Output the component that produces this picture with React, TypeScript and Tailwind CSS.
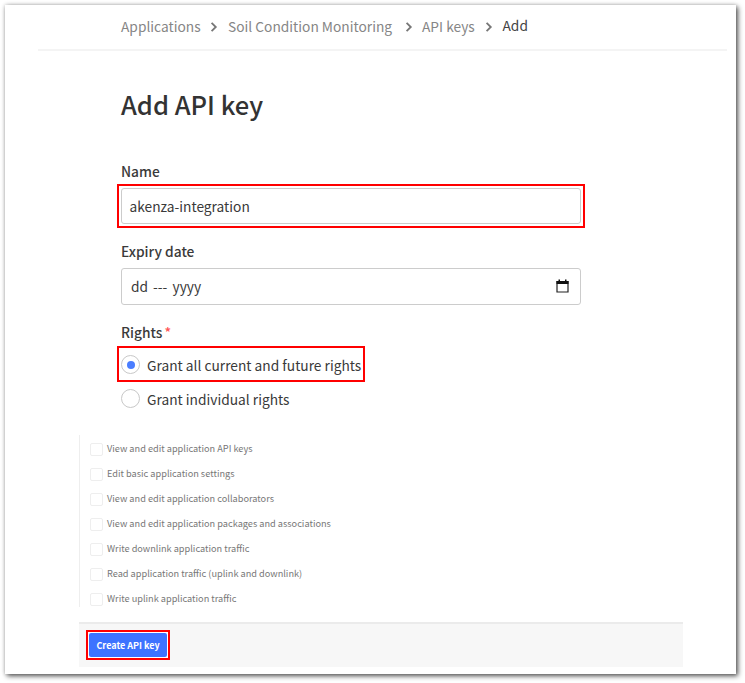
const rights = [
  'View and edit application API keys',
  'Edit basic application settings',
  'View and edit application collaborators',
  'View and edit application packages and associations',
  'Write downlink application traffic',
  'Read application traffic (uplink and downlink)',
  'Write uplink application traffic',
];

function Chevron({ className }: { className: string }) {
  return (
    <svg viewBox="0 0 8 12" className={`h-3 w-2 shrink-0 ${className}`} fill="none" stroke="#777" strokeWidth="1.8">
      <path d="M1.6 1.8 L5.8 6 L1.6 10.2" />
    </svg>
  );
}

function Breadcrumbs() {
  return (
    <nav className="ml-[33px] mr-[9px] flex h-[46px] items-center border-b-2 border-[#f4f4f4] pl-[83px] text-[13.75px] text-[#868686]">
      <span className="w-[80px]">Applications</span>
      <Chevron className="ml-[9px]" />
      <span className="ml-[10px] w-[165px]">Soil Condition Monitoring</span>
      <Chevron className="ml-[12px]" />
      <span className="ml-[9px] w-[54px]">API keys</span>
      <Chevron className="ml-[9px]" />
      <span className="mb-[2px] ml-[9.5px] text-[#444]">Add</span>
    </nav>
  );
}

function Radio({ label, checked = false }: { label: string; checked?: boolean }) {
  return (
    <label className="flex items-center text-[13.75px]">
      <span className="mr-[7px] flex size-[19px] items-center justify-center rounded-full border border-[#c8c8c8]">
        {checked && <span className="size-[8px] rounded-full bg-[#4a7dff]" />}
      </span>
      <span className="mt-[2px]">{label}</span>
    </label>
  );
}

export default function App() {
  return (
    <div className="h-[683px] w-[745px] overflow-hidden bg-white pl-[5px] pt-[5px] font-['Noto_Sans_CJK_SC',sans-serif] leading-none whitespace-nowrap text-[#3a3a3a]">
      <div className="h-[669px] w-[731px] bg-white shadow-[2px_2px_5px_0px_rgba(0,0,0,0.65),0_0_4px_rgba(0,0,0,0.2)]">
        <Breadcrumbs />
        <form className="ml-[112px] flex flex-col">
          <h1 className="ml-[4px] mt-[33px] h-[40px] text-[25.5px] font-medium leading-[40px] text-[#333]">Add API key</h1>
          <div className="ml-[4px] mt-[37px] h-[20px] text-[13.75px] font-medium leading-[20px]">Name</div>
          <div className="mt-[3px] h-[44px] w-[468px] border-2 border-[#f00] p-[2px]">
            <div className="flex h-[36px] items-center rounded-[3px] border border-[#ccc] pl-[7.5px] pt-[2px] text-[13.75px]">akenza-integration</div>
          </div>
          <div className="ml-[4px] mt-[13px] h-[20px] text-[13.75px] font-medium leading-[20px]">Expiry date</div>
          <div className="ml-[4px] mt-[7px] flex h-[37px] w-[460px] items-center rounded-[3px] border border-[#ccc] pl-[9px] pr-[11px] text-[13.75px]">
            <span className="w-[22px]">dd</span>
            <span className="w-[19.5px]">---</span>
            <span>yyyy</span>
            <svg viewBox="0 0 13 14" className="mb-[2px] ml-auto h-[14px] w-[13px]">
              <path d="M1 2.5H12V13H1Z" fill="none" stroke="#222" strokeWidth="1.2" />
              <path d="M.5 2H12.5V5H.5ZM2.5 .5H4V2H2.5ZM9 .5H10.5V2H9Z" fill="#111" />
            </svg>
          </div>
          <div className="ml-[4px] mt-[17px] h-[20px] text-[13.75px] font-medium leading-[20px]">
            Rights<span className="ml-[2px] text-[#f55]">*</span>
          </div>
          <div className="mt-[4px] flex h-[36px] w-[248px] items-center border-2 border-[#f00] pl-[2px] pt-px">
            <Radio label="Grant all current and future rights" checked />
          </div>
          <div className="ml-[4px] mt-[7px]">
            <Radio label="Grant individual rights" />
          </div>
        </form>
        <ul className="ml-[74px] mt-[27px] h-[172px] border-l border-[#eee] pl-[10px] pt-[2px]">
          {rights.map((right) => (
            <li key={right} className="flex h-[25px] items-center text-[9.2px] text-[#777]">
              <span className="mr-[4px] size-[13px] rounded-[2px] border border-[#eee]" />
              <span className="mb-[2px]">{right}</span>
            </li>
          ))}
        </ul>
        <div className="ml-[74px] mt-[15px] h-[45px] w-[604px] border-t-2 border-[#ebebeb] bg-[#f7f7f7] pl-[7px] pt-[6px]">
          <div className="h-[30px] w-[84px] border-2 border-[#f00] bg-white p-[1px]">
            <button className="flex h-[24px] w-[78px] items-center justify-center rounded-[2px] bg-[#3d73ff] text-[9px] font-bold text-white">Create API key</button>
          </div>
        </div>
      </div>
    </div>
  );
}
